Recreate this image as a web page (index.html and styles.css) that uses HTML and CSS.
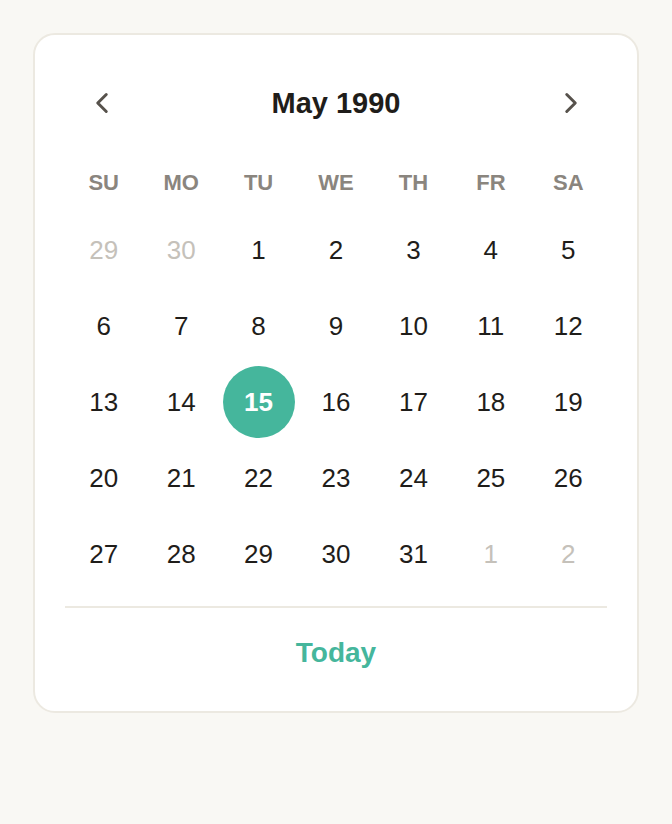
FILE: index.html
```html
<!doctype html>
<html lang="en">
  <head>
    <meta charset="UTF-8" />
    <meta name="viewport" content="width=device-width, initial-scale=1.0" />
    <title>Date picker</title>
    <link rel="stylesheet" href="styles.css">
  </head>
  <body>
    <div class="picker">
      <div class="picker-header">
        <button class="nav-btn" aria-label="Previous month">
          <svg width="34" height="34" viewBox="0 0 24 24" fill="none" stroke="currentColor" stroke-width="2.1" stroke-linecap="round" stroke-linejoin="round">
            <path d="m15 18-6-6 6-6" />
          </svg>
        </button>
        <h1 class="month-title">May 1990</h1>
        <button class="nav-btn" aria-label="Next month">
          <svg width="34" height="34" viewBox="0 0 24 24" fill="none" stroke="currentColor" stroke-width="2.1" stroke-linecap="round" stroke-linejoin="round">
            <path d="m9 18 6-6-6-6" />
          </svg>
        </button>
      </div>

      <div class="weekdays">
        <span>SU</span><span>MO</span><span>TU</span><span>WE</span><span>TH</span><span>FR</span><span>SA</span>
      </div>

      <div class="days">
        <span class="day muted">29</span>
        <span class="day muted">30</span>
        <span class="day">1</span>
        <span class="day">2</span>
        <span class="day">3</span>
        <span class="day">4</span>
        <span class="day">5</span>
        <span class="day">6</span>
        <span class="day">7</span>
        <span class="day">8</span>
        <span class="day">9</span>
        <span class="day">10</span>
        <span class="day">11</span>
        <span class="day">12</span>
        <span class="day">13</span>
        <span class="day">14</span>
        <span class="day selected">15</span>
        <span class="day">16</span>
        <span class="day">17</span>
        <span class="day">18</span>
        <span class="day">19</span>
        <span class="day">20</span>
        <span class="day">21</span>
        <span class="day">22</span>
        <span class="day">23</span>
        <span class="day">24</span>
        <span class="day">25</span>
        <span class="day">26</span>
        <span class="day">27</span>
        <span class="day">28</span>
        <span class="day">29</span>
        <span class="day">30</span>
        <span class="day">31</span>
        <span class="day muted">1</span>
        <span class="day muted">2</span>
      </div>

      <div class="picker-footer">
        <button class="today-btn">Today</button>
      </div>
    </div>
  </body>
</html>
```

FILE: styles.css
```css
body {
  margin: 0;
  padding: 33px;
  min-height: 100vh;
  box-sizing: border-box;
  background: #f9f8f4;
  font-family: "Liberation Sans", Arial, sans-serif;
  color: #1f1d1a;
}

.picker {
  width: 606px;
  box-sizing: border-box;
  background: #ffffff;
  border: 2px solid #ece9e1;
  border-radius: 22px;
  padding: 30px 30px 13px;
}

.picker-header {
  height: 76px;
  display: grid;
  grid-template-columns: 73px 1fr 73px;
  align-items: center;
}

.nav-btn {
  display: flex;
  align-items: center;
  justify-content: center;
  background: none;
  border: none;
  padding: 0;
  color: #57524c;
  cursor: pointer;
}

.month-title {
  margin: 0;
  text-align: center;
  font-size: 29px;
  font-weight: 700;
  color: #1f1d1a;
}

.weekdays {
  display: grid;
  grid-template-columns: repeat(7, 1fr);
  margin-top: 22px;
  height: 40px;
  align-items: center;
  text-align: center;
  font-size: 22px;
  font-weight: 700;
  color: #8a857e;
}

.days {
  display: grid;
  grid-template-columns: repeat(7, 1fr);
  grid-auto-rows: 76px;
  margin-top: 9px;
}

.day {
  display: flex;
  align-items: center;
  justify-content: center;
  font-size: 26px;
  color: #1f1d1a;
}

.day.muted {
  color: #c5c1ba;
}

.day.selected {
  width: 72px;
  height: 72px;
  justify-self: center;
  align-self: center;
  border-radius: 50%;
  background: #45b69c;
  color: #ffffff;
  font-weight: 700;
}

.picker-footer {
  margin-top: 14px;
  height: 90px;
  border-top: 2px solid #ece9e1;
  display: flex;
  align-items: center;
  justify-content: center;
}

.today-btn {
  background: none;
  border: none;
  padding: 0;
  font-family: inherit;
  font-size: 28px;
  font-weight: 700;
  color: #45b69c;
  cursor: pointer;
}
```
